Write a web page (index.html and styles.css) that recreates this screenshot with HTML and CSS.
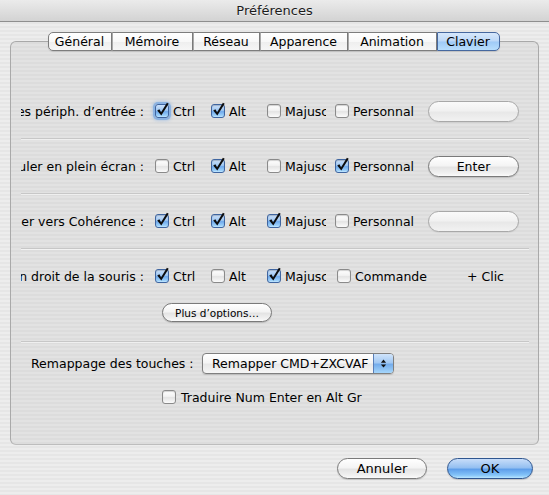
FILE: index.html
```html
<!DOCTYPE html>
<html lang="fr">
<head>
<meta charset="utf-8">
<title>Préférences</title>
<link rel="stylesheet" href="styles.css">
</head>
<body>
<div class="window">
  <header class="titlebar">Préférences</header>

  <div class="tabview">
    <nav class="tabs">
      <span class="tab t-general">Général</span>
      <span class="tab t-memoire">Mémoire</span>
      <span class="tab t-reseau">Réseau</span>
      <span class="tab t-apparence">Apparence</span>
      <span class="tab t-animation">Animation</span>
      <span class="tab t-clavier selected">Clavier</span>
    </nav>

    <section class="group">
      <div class="row">
        <span class="label"><span>Capturer les périph. d’entrée :</span></span>
        <span class="opt c1"><span class="cb on focus"><svg class="tick" viewBox="0 0 14 14"><path d="M2.2 6.4 4.4 5.2 6.1 8.3 11.9 -1.3 13.7 -0.2 6.3 11.6Z"/></svg></span><span class="txt">Ctrl</span></span>
        <span class="opt c2"><span class="cb on"><svg class="tick" viewBox="0 0 14 14"><path d="M2.2 6.4 4.4 5.2 6.1 8.3 11.9 -1.3 13.7 -0.2 6.3 11.6Z"/></svg></span><span class="txt">Alt</span></span>
        <span class="opt c3"><span class="cb"></span><span class="txt">Majuscule</span></span>
        <span class="opt c4"><span class="cb"></span><span class="txt">Personnal</span></span>
        <span class="btn key disabled"></span>
      </div>
      <hr class="sep">

      <div class="row">
        <span class="label"><span>Basculer en plein écran :</span></span>
        <span class="opt c1"><span class="cb"></span><span class="txt">Ctrl</span></span>
        <span class="opt c2"><span class="cb on"><svg class="tick" viewBox="0 0 14 14"><path d="M2.2 6.4 4.4 5.2 6.1 8.3 11.9 -1.3 13.7 -0.2 6.3 11.6Z"/></svg></span><span class="txt">Alt</span></span>
        <span class="opt c3"><span class="cb"></span><span class="txt">Majuscule</span></span>
        <span class="opt c4"><span class="cb on"><svg class="tick" viewBox="0 0 14 14"><path d="M2.2 6.4 4.4 5.2 6.1 8.3 11.9 -1.3 13.7 -0.2 6.3 11.6Z"/></svg></span><span class="txt">Personnal</span></span>
        <span class="btn key">Enter</span>
      </div>
      <hr class="sep">

      <div class="row">
        <span class="label"><span>Basculer vers Cohérence :</span></span>
        <span class="opt c1"><span class="cb on"><svg class="tick" viewBox="0 0 14 14"><path d="M2.2 6.4 4.4 5.2 6.1 8.3 11.9 -1.3 13.7 -0.2 6.3 11.6Z"/></svg></span><span class="txt">Ctrl</span></span>
        <span class="opt c2"><span class="cb on"><svg class="tick" viewBox="0 0 14 14"><path d="M2.2 6.4 4.4 5.2 6.1 8.3 11.9 -1.3 13.7 -0.2 6.3 11.6Z"/></svg></span><span class="txt">Alt</span></span>
        <span class="opt c3"><span class="cb on"><svg class="tick" viewBox="0 0 14 14"><path d="M2.2 6.4 4.4 5.2 6.1 8.3 11.9 -1.3 13.7 -0.2 6.3 11.6Z"/></svg></span><span class="txt">Majuscule</span></span>
        <span class="opt c4"><span class="cb"></span><span class="txt">Personnal</span></span>
        <span class="btn key disabled"></span>
      </div>
      <hr class="sep">

      <div class="row">
        <span class="label"><span>Bouton droit de la souris :</span></span>
        <span class="opt c1"><span class="cb on"><svg class="tick" viewBox="0 0 14 14"><path d="M2.2 6.4 4.4 5.2 6.1 8.3 11.9 -1.3 13.7 -0.2 6.3 11.6Z"/></svg></span><span class="txt">Ctrl</span></span>
        <span class="opt c2"><span class="cb"></span><span class="txt">Alt</span></span>
        <span class="opt c3 wide"><span class="cb on"><svg class="tick" viewBox="0 0 14 14"><path d="M2.2 6.4 4.4 5.2 6.1 8.3 11.9 -1.3 13.7 -0.2 6.3 11.6Z"/></svg></span><span class="txt">Majuscule</span></span>
        <span class="opt c4"><span class="cb"></span><span class="txt">Commande</span></span>
        <span class="click">+ Clic</span>
      </div>
      <div class="more-row">
        <span class="btn small">Plus d’options…</span>
      </div>
      <hr class="sep">

      <div class="remap-row">
        <span class="remap-label">Remappage des touches :</span>
        <span class="popup">
          <span class="popup-value">Remapper CMD+ZXCVAF</span>
          <span class="popup-arrows"><svg viewBox="0 0 8 12"><path d="M4 1.5 7 5H1Z"/><path d="M4 10.5 7 7H1Z"/></svg></span>
        </span>
      </div>
      <div class="check-row">
        <span class="cb"></span><span class="txt">Traduire Num Enter en Alt Gr</span>
      </div>
    </section>
  </div>

  <footer class="actions">
    <span class="btn push">Annuler</span>
    <span class="btn push default">OK</span>
  </footer>
</div>
</body>
</html>
```

FILE: styles.css
```css
* {
  box-sizing: border-box;
}

html,
body {
  margin: 0;
  padding: 0;
}

body {
  width: 549px;
  height: 495px;
  overflow: hidden;
  font-family: "DejaVu Sans", "Lucida Grande", sans-serif;
  font-size: 12.5px;
  color: #000;
  background: repeating-linear-gradient(to bottom, #ededed 0 2px, #e6e6e6 2px 4px);
}

/* ---------- title bar ---------- */
.titlebar {
  height: 22px;
  line-height: 21px;
  text-align: center;
  font-size: 13px;
  color: #1c1c1c;
  background: linear-gradient(#ebebeb, #d3d3d3);
  border-bottom: 1px solid #8f8f8f;
  text-shadow: 0 1px 0 rgba(255, 255, 255, 0.6);
}

/* ---------- tab view ---------- */
.tabview {
  padding: 10px 10px 0;
}

.tabs {
  position: relative;
  z-index: 1;
  display: flex;
  justify-content: center;
  height: 19px;
  padding-right: 2px;
}

.tab {
  height: 19px;
  line-height: 17px;
  text-align: center;
  border: 1px solid #7d7d7d;
  border-left: 1px solid #a9a9a9;
  background: linear-gradient(#ffffff 0%, #f8f8f8 50%, #eeeeee 52%, #f6f6f6 100%);
  box-shadow: 0 1px 1px rgba(0, 0, 0, 0.12);
}

.tab:first-child {
  border-left-color: #7d7d7d;
  border-radius: 5px 0 0 5px;
}

.tab:last-child {
  border-radius: 0 5px 5px 0;
}

.t-general { width: 64px; }
.t-memoire { width: 81px; }
.t-reseau { width: 67px; }
.t-apparence { width: 88px; }
.t-animation { width: 89px; }
.t-clavier { width: 63px; }

.tab.selected {
  border-color: #46689f;
  background: linear-gradient(#d6e7fb 0%, #bdd8f7 48%, #9fcaf6 52%, #b8defd 100%);
}

.group {
  margin-top: -10px;
  height: 404px;
  padding: 42px 9px 0 10px;
  border: 1px solid #a9a9a9;
  border-bottom-color: #bdbdbd;
  border-radius: 6px;
  background: rgba(0, 0, 0, 0.045);
}

/* ---------- shortcut rows ---------- */
.row {
  display: flex;
  align-items: center;
  height: 54px;
}

.label {
  width: 123px;
  margin-right: 11px;
  display: flex;
  justify-content: flex-end;
  overflow: hidden;
  white-space: nowrap;
}

.label > span {
  flex: none;
}

.opt {
  display: flex;
  align-items: center;
  gap: 4px;
  white-space: nowrap;
}

.opt .txt {
  flex: 1;
  min-width: 0;
  overflow: hidden;
}

.c1,
.c2 { width: 56px; }
.c3 { width: 59px; margin-right: 9px; }
.c3.wide { margin-right: 11px; }
.c4 { width: 93px; }

.sep {
  margin: 0;
  height: 0;
  border: 0;
  border-top: 1px solid #c7c7c7;
  box-shadow: 0 1px 0 rgba(255, 255, 255, 0.55);
}

.click {
  margin-left: 37px;
}

/* ---------- checkboxes ---------- */
.cb {
  position: relative;
  flex: none;
  width: 14px;
  height: 14px;
  border: 1px solid #8a8a8a;
  border-radius: 3px;
  background: linear-gradient(#ffffff 0%, #f2f2f2 45%, #e4e4e4 55%, #fbfbfb 100%);
  box-shadow: inset 0 1px 1px rgba(0, 0, 0, 0.18);
}

.cb.on {
  border-color: #3f65a0;
  background: linear-gradient(#cde2fb 0%, #9fc7f2 45%, #70aaec 55%, #9fd3fb 90%, #c6e9ff 100%);
  box-shadow: inset 0 1px 1px rgba(0, 0, 0, 0.2);
}

.cb.focus {
  border-radius: 3px;
  box-shadow: 0 0 0 2px rgba(120, 168, 226, 0.7), 0 0 3px 3px rgba(120, 168, 226, 0.4);
}

.tick {
  position: absolute;
  left: -1px;
  top: -1px;
  width: 14px;
  height: 14px;
  overflow: visible;
}

.tick path {
  fill: #0d0d0d;
}

/* ---------- buttons ---------- */
.btn {
  display: flex;
  align-items: center;
  justify-content: center;
  flex: none;
  border: 1px solid #7a7a7a;
  background: linear-gradient(#ffffff 0%, #f4f4f4 45%, #e4e4e4 55%, #f1f1f1 85%, #fbfbfb 100%);
  box-shadow: 0 1px 1px rgba(0, 0, 0, 0.16);
  white-space: nowrap;
}

.key {
  width: 91px;
  height: 21px;
  border-radius: 11px;
}

.key.disabled {
  border-color: #a8a8a8;
  background: linear-gradient(#fafafa 0%, #f1f1f1 45%, #e8e8e8 55%, #f2f2f2 100%);
  box-shadow: 0 1px 1px rgba(0, 0, 0, 0.06);
}

.more-row {
  display: flex;
  height: 19px;
  margin-bottom: 19px;
  padding-left: 141px;
}

.small {
  width: 110px;
  height: 19px;
  border-radius: 10px;
  font-size: 10.5px;
}

/* ---------- remap popup ---------- */
.remap-row {
  display: flex;
  align-items: center;
  margin-top: 11px;
  padding-left: 10px;
  height: 21px;
}

.remap-label {
  width: 171px;
  white-space: nowrap;
}

.popup {
  display: flex;
  width: 192px;
  height: 21px;
  border: 1px solid #7f7f7f;
  border-radius: 4px;
  overflow: hidden;
  background: linear-gradient(#ffffff 0%, #f5f5f5 45%, #e8e8e8 55%, #f6f6f6 100%);
  box-shadow: 0 1px 1px rgba(0, 0, 0, 0.15);
}

.popup-value {
  flex: 1;
  padding-left: 9px;
  line-height: 19px;
  white-space: nowrap;
}

.popup-arrows {
  display: flex;
  align-items: center;
  justify-content: center;
  width: 20px;
  border-left: 1px solid #5a7fb8;
  background: linear-gradient(#d0e4fb 0%, #a3c9f3 45%, #75adec 55%, #a5d6fb 100%);
}

.popup-arrows svg {
  width: 7px;
  height: 11px;
  fill: #111;
}

.check-row {
  display: flex;
  align-items: center;
  gap: 5px;
  height: 20px;
  margin-top: 13px;
  padding-left: 141px;
}

/* ---------- dialog buttons ---------- */
.actions {
  display: flex;
  justify-content: flex-end;
  gap: 20px;
  margin-top: 13px;
  padding-right: 16px;
}

.push {
  height: 21px;
  border-radius: 11px;
  font-size: 13px;
}

.push:first-child {
  width: 90px;
}

.push.default {
  width: 86px;
  border-color: #2f568f;
  background: linear-gradient(#c8ddf9 0%, #95c0f1 45%, #5f9fea 55%, #84c4f8 85%, #b9e6ff 100%);
}
```
